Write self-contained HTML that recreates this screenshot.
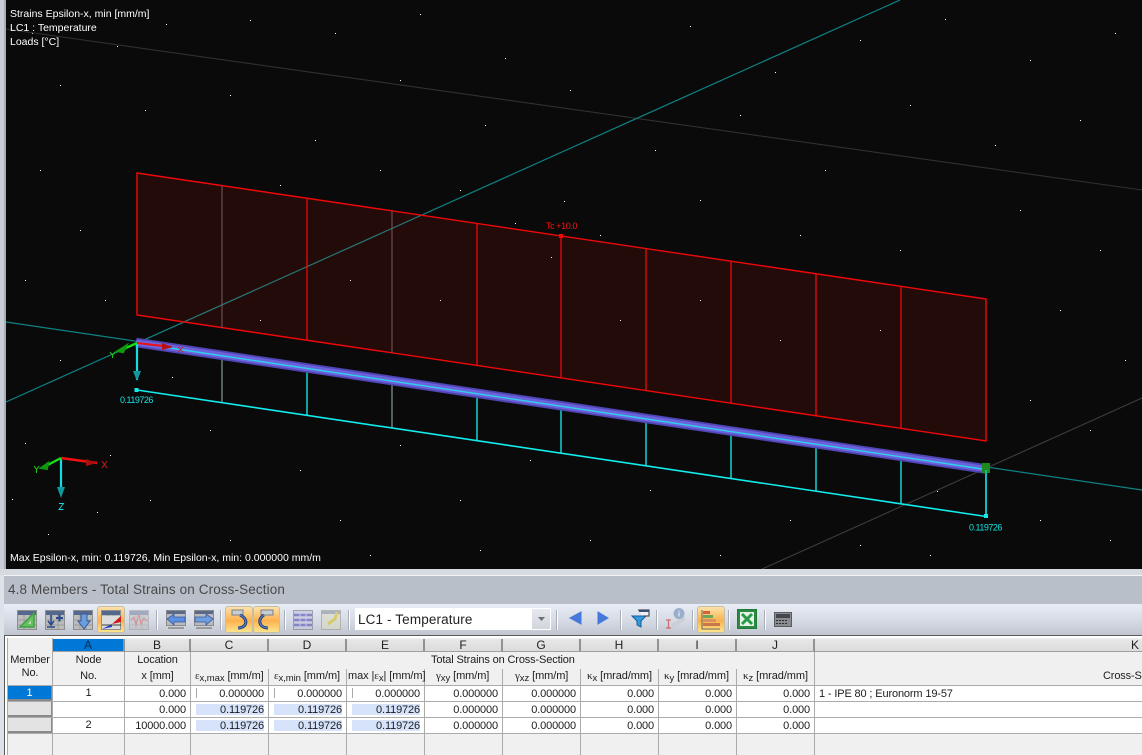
<!DOCTYPE html>
<html><head><meta charset="utf-8"><style>
html,body{margin:0;padding:0;background:#e2e5eb}
#r{position:relative;width:1142px;height:755px;overflow:hidden;background:#dde1e8;font-family:"Liberation Sans",sans-serif;color:#111}
#r svg{position:absolute}
.a{position:absolute;white-space:nowrap}
.t{position:absolute;color:#fff;font-size:10.5px;left:10px;white-space:nowrap;line-height:14px}
.h{position:absolute;top:639px;height:12px;background:linear-gradient(#e8e8e8,#dcdcdc);border-right:2px solid #929292;border-bottom:1px solid #a0a0a0;text-align:center;font-size:12px;line-height:13px;color:#222}
.c{position:absolute;font-size:11px;letter-spacing:-.14px;line-height:14px;white-space:nowrap;color:#1c1c1c}
.f{font-size:11px;letter-spacing:-.08px}
.r{text-align:right}
.m{text-align:center}
.v{position:absolute;width:1px;background:#ababab}
.ln{position:absolute;left:7px;right:0;height:1px;background:#ababab}
.w{position:absolute;height:16px;background:#fff}
.b{position:absolute;height:11px;background:#d6e3fb}
.k{position:absolute;width:1px;height:10px;background:#a8a8a8}
.rb{position:absolute;left:8px;width:43px;height:13px;background:#e3e3e3;border-right:1px solid #8a8a8a;border-bottom:2px solid #8a8a8a}
.sep{position:absolute;top:610px;width:1px;height:20px;background:#a8adb6;border-right:1px solid #fff}
.act{position:absolute;top:606px;height:27px;border:1px solid #c4bfa4;border-radius:3px;background:linear-gradient(#fde3aa,#fcb14e 55%,#fde48c);box-sizing:border-box}
sub{font-size:9.5px;line-height:0;vertical-align:baseline;position:relative;top:2px}
.s{font-family:"Liberation Serif",serif}
</style></head><body><div id="r">

<svg style="left:6px;top:0" width="1136" height="569" viewBox="6 0 1136 569">
<rect x="6" y="0" width="1136" height="569" fill="#0a0a0a"/>
<g fill="#fff">
<path d="M166 24h1v1h-1zM32 33h1v1h-1zM117 46h1v1h-1zM564 201h1v1h-1zM515 223h1v1h-1zM600 235h1v1h-1zM551 257h1v1h-1zM172 377h1v1h-1zM937 491h1v1h-1zM25 443h1v1h-1zM110 455h1v1h-1zM12 499h1v1h-1zM97 512h1v1h-1zM48 534h1v1h-1zM250 20h1v1h-1zM335 33h1v1h-1zM420 14h1v1h-1zM505 58h1v1h-1zM690 26h1v1h-1zM775 72h1v1h-1zM860 40h1v1h-1zM945 19h1v1h-1zM1030 60h1v1h-1zM1115 33h1v1h-1zM60 85h1v1h-1zM145 110h1v1h-1zM230 95h1v1h-1zM315 140h1v1h-1zM400 80h1v1h-1zM485 125h1v1h-1zM570 90h1v1h-1zM655 150h1v1h-1zM740 115h1v1h-1zM825 170h1v1h-1zM910 105h1v1h-1zM995 145h1v1h-1zM1080 120h1v1h-1zM40 170h1v1h-1zM80 230h1v1h-1zM25 280h1v1h-1zM105 300h1v1h-1zM60 360h1v1h-1zM1020 210h1v1h-1zM1100 250h1v1h-1zM1060 310h1v1h-1zM1125 360h1v1h-1zM1030 400h1v1h-1zM1090 430h1v1h-1zM1040 520h1v1h-1zM1110 540h1v1h-1zM280 185h1v1h-1zM380 170h1v1h-1zM460 190h1v1h-1zM700 200h1v1h-1zM800 235h1v1h-1zM900 250h1v1h-1zM210 430h1v1h-1zM300 470h1v1h-1zM150 500h1v1h-1zM230 540h1v1h-1zM340 520h1v1h-1zM400 445h1v1h-1zM460 500h1v1h-1zM530 460h1v1h-1zM590 540h1v1h-1zM650 490h1v1h-1zM720 555h1v1h-1zM790 520h1v1h-1zM860 545h1v1h-1zM930 555h1v1h-1zM370 555h1v1h-1zM480 550h1v1h-1zM260 320h1v1h-1zM350 280h1v1h-1zM440 300h1v1h-1zM620 320h1v1h-1zM700 300h1v1h-1zM780 340h1v1h-1zM880 330h1v1h-1z"/>
</g>
<g fill="none">
<path d="M6 29L1142 190" stroke="#303030" stroke-width="1.100"/>
<path d="M760 570L1142 398" stroke="#3c3c3c" stroke-width="1.100"/>
<path d="M6 402L900 0" stroke="#0e8284" stroke-width="1.200"/>
<path d="M6 322L1142 490" stroke="#0e8284" stroke-width="1.200"/>
</g>
<polygon points="137,173 986,299 986,441 137,315" fill="#ff1c0c" fill-opacity=".105"/>
<polygon points="137,173 986,299 986,441 137,315" fill="none" stroke="#f00808" stroke-width="1.400"/>
<path d="M222 186V328M392 211V353" stroke="#7d5a5a" stroke-width="1"/>
<path d="M307 198V340M477 223.500V365.500M561 236V378M646 248.500V390.500M731 261V403M816 274V416M901 286.500V428.500" stroke="#f00808" stroke-width="1.300"/>
<rect x="559" y="234" width="4" height="4" fill="#f00808"/>
<text x="546" y="229" fill="#ff1010" font-family="Liberation Sans" font-size="9" letter-spacing="-.4">Tc +10.0</text>
<path d="M222 356V403M392 381V428" stroke="#a0b4b4" stroke-width="1"/>
<path d="M307 369V416M477 394V441M561 407V453M646 419V466M731 432V478M816 444V491M901 457V503" stroke="#12e4e4" stroke-width="1.400"/>
<path d="M137 390L986 516.500M986 470V516" stroke="#12ecec" stroke-width="1.600" fill="none"/>
<rect x="984" y="514" width="4" height="4" fill="#12ecec"/>
<rect x="134.500" y="388" width="4" height="4" fill="#12ecec"/>
<path d="M136 342.500L986 469" stroke="#4f45b4" stroke-width="9.500"/>
<path d="M136 342.500L986 469" stroke="#6c62dc" stroke-width="6"/>
<path d="M170 348L986 469.500" stroke="#30d0ec" stroke-width="1.400"/>
<rect x="982" y="463" width="8" height="10" fill="#1c8a1c"/>
<path d="M986 470V474" stroke="#12e4e4"/>
<path d="M137 343V380" stroke="#14dce0" stroke-width="2.200"/>
<path d="M133 371L141 371L137 381Z" fill="#109aa0"/>
<path d="M137 343L172 347" stroke="#f01010" stroke-width="2"/>
<path d="M162 343L172 347L162 350Z" fill="#b81010"/>
<path d="M137 343L119 351" stroke="#14e014" stroke-width="2.400"/>
<path d="M126 346L118 351L123 352Z" fill="#0e980e" stroke="#0e980e" stroke-width="2.500"/>
<path d="M178 347L183 352M183 347L178 352" stroke="#c81818" stroke-width=".8"/>
<path d="M110 352L112.500 355L115 352M112.500 355V358" stroke="#14e014" stroke-width=".9" fill="none"/>
<text x="120" y="403" fill="#12e4e4" font-family="Liberation Sans" font-size="9" letter-spacing="-.5">0.119726</text>
<text x="969" y="530.500" fill="#12e4e4" font-family="Liberation Sans" font-size="9" letter-spacing="-.5">0.119726</text>

<path d="M61 458V490" stroke="#14dce0" stroke-width="2.200"/>
<path d="M57 487L65 487L61 498Z" fill="#109aa0"/>
<path d="M61 458L97 463" stroke="#f01010" stroke-width="2.400"/>
<path d="M86 459L97 463L86 466Z" fill="#a81010"/>
<path d="M61 458L42 468" stroke="#14e014" stroke-width="2.400"/>
<path d="M48 463L41 468L47 469Z" fill="#0e980e" stroke="#0e980e" stroke-width="2"/>
<path d="M102 461L107 468M107 461L102 468" stroke="#d81818" stroke-width=".9"/>
<path d="M34 466L36.500 469.500L39 466M36.500 469.500V473" stroke="#14e014" stroke-width=".9" fill="none"/>
<path d="M59 503.500H63.500L59 509.500H63.500" stroke="#14dce0" stroke-width=".9" fill="none"/>
</svg>
<div class="t" style="top:7px">Strains Epsilon-x, min [mm/m]</div>
<div class="t" style="top:21px">LC1 : Temperature</div>
<div class="t" style="top:35px">Loads [°C]</div>
<div class="t" style="top:551px">Max Epsilon-x, min: 0.119726, Min Epsilon-x, min: 0.000000 mm/m</div>

<div class="a" style="left:0;top:0;width:6px;height:570px;background:#c9cdd5"></div>
<div class="a" style="left:4px;top:0;width:2px;height:570px;background:#a9adb5"></div>
<div class="a" style="left:0;top:569px;width:1142px;height:6px;background:#d5d9e0"></div>
<div class="a" style="left:4px;top:575px;width:1138px;height:1px;background:#f2f4f7"></div>
<div class="a" style="left:4px;top:576px;width:1138px;height:28px;background:#b9bfc9"></div>
<div class="a" style="left:8px;top:581px;font-size:13.5px;line-height:17px;color:#484848;letter-spacing:.11px">4.8 Members - Total Strains on Cross-Section</div>
<div class="a" style="left:4px;top:604px;width:1138px;height:31px;background:linear-gradient(#e9edf6,#d3d8e2 60%,#c0c5cf)"></div>
<div class="a" style="left:4px;top:635px;width:1138px;height:1px;background:#5c5c5c"></div>
<div class="a" style="left:4px;top:636px;width:1138px;height:119px;background:#fff"></div>
<div class="a" style="left:4px;top:635px;width:1px;height:120px;background:#5c5c5c"></div>

<!-- toolbar -->
<div class="act" style="left:97px;width:28px"></div>
<div class="act" style="left:225px;width:28px"></div>
<div class="act" style="left:253px;width:27px"></div>
<div class="act" style="left:697px;width:28px"></div>
<div class="sep" style="left:156px"></div><div class="sep" style="left:220px"></div><div class="sep" style="left:284px"></div><div class="sep" style="left:348px"></div><div class="sep" style="left:556px"></div><div class="sep" style="left:620px"></div><div class="sep" style="left:656px"></div><div class="sep" style="left:692px"></div><div class="sep" style="left:728px"></div><div class="sep" style="left:764px"></div>
<div class="a" style="left:355px;top:608px;width:196px;height:22px;background:#fff"></div>
<div class="a" style="left:532px;top:609px;width:18px;height:20px;background:linear-gradient(#e6e9ef,#d2d5dc)"></div>
<svg style="left:537px;top:616px" width="9" height="6"><path d="M1 1H8L4.500 5Z" fill="#6b6f78"/></svg>
<div class="a" style="left:358px;top:612px;font-size:13.500px;line-height:16px;color:#222;letter-spacing:.13px">LC1 - Temperature</div>

<svg style="left:0;top:604px" width="1142" height="32" viewBox="0 604 1142 32">
<defs>
<g id="g"><rect x=".5" y=".5" width="19" height="19" fill="#bcbcbc" stroke="#8e8e8e"/><rect x="1" y="1" width="18" height="4" fill="#54688e"/><path d="M1 10H19M1 15H19M7 5V19M13 5V19" stroke="#9c9c9c" stroke-width="1"/></g>
<g id="g2"><rect x=".5" y=".5" width="19" height="15" fill="#b9bbc0" stroke="#8a8a8a"/><rect x="1" y="1" width="18" height="3" fill="#5a6a86"/><path d="M2 17h16v2h-16z" fill="#9a9a9a"/></g>
</defs>
<use href="#g" x="17" y="610"/>
<path d="M20 627L34 627L34 613Z" fill="#63c25c" stroke="#3f9f46" stroke-width="1.500"/><path d="M28 624H31V620Z" fill="#b8d8b0"/>
<use href="#g" x="45" y="610"/>
<path d="M51 615V624M48 621L51 625L54 621M47 627H55" stroke="#2a4a8a" stroke-width="1.500" fill="none"/><path d="M56 618H63M59.500 614.500V621.500" stroke="#2a4a8a" stroke-width="2"/>
<use href="#g" x="73" y="610"/>
<path d="M81 614H87V621H90L84 629L78 621H81Z" fill="#6a9ede" stroke="#3a5a98"/>
<use href="#g" x="101" y="610"/>
<rect x="102" y="616" width="18" height="13" fill="#dcdcdc"/>
<path d="M102 629L112 624V627Z" fill="#2340c8"/><path d="M112 624L121 616V622Z" fill="#d01818"/>
<path d="M102 625H121" stroke="#444" stroke-width="1"/>
<g opacity=".45"><use href="#g" x="129" y="610"/><path d="M131 620L134 617L136 625L139 614L141 624L144 618L147 621" stroke="#d83838" fill="none"/></g>
<use href="#g2" x="166" y="610"/>
<path d="M167 619L174 614V617H185V622H174V625Z" fill="#5b8fe0" stroke="#3a5a98" stroke-width=".8"/>
<use href="#g2" x="194" y="610"/>
<path d="M213 619L206 614V617H195V622H206V625Z" fill="#6e9de0" stroke="#3a5a98" stroke-width=".8"/>
<path d="M232 610H243V615H232Z" fill="#c8ccd4" stroke="#7a7f8a"/><path d="M240 615C249 619 247 628 238 628" stroke="#1f3a78" stroke-width="3" fill="none"/><path d="M240 615C249 619 247 628 238 628" stroke="#5b88c8" stroke-width="1" fill="none"/>
<path d="M261 610H273V615H261Z" fill="#c8ccd4" stroke="#7a7f8a"/><path d="M264 615C257 619 259 628 268 628" stroke="#1f3a78" stroke-width="3" fill="none"/><path d="M264 615C257 619 259 628 268 628" stroke="#5b88c8" stroke-width="1" fill="none"/>
<g opacity=".75"><rect x="293.500" y="610.500" width="19" height="19" fill="#c8cae0" stroke="#8a8a9a"/><path d="M294 615H312M294 620H312M294 625H312" stroke="#6a6ac0" stroke-width="2.500"/><path d="M300 611V629M306 611V629" stroke="#c8c8d8"/></g>
<g opacity=".6"><rect x="321.500" y="610.500" width="19" height="19" fill="#dcdcc4" stroke="#9a9a8e"/><rect x="322" y="611" width="18" height="3" fill="#8a90a0"/><path d="M328 624L335 619L337 612" stroke="#d8c020" stroke-width="3" fill="none"/></g>
<path d="M570 618L581 612V624Z" fill="#4678dc" stroke="#4678dc"/>
<path d="M608 618L598 612V624Z" fill="#4678dc" stroke="#4678dc"/>
<path d="M632 616H646L641 621V627L637 625V621Z" fill="#2f9ae0" stroke="#1c5c98"/><path d="M638 610H649V616H643" fill="#eef0f4" stroke="#4a4f58" stroke-width="1.200"/><rect x="639" y="610" width="10" height="2" fill="#3a4f78"/>
<g opacity=".7"><path d="M666 620H671M666 628H671M668.500 620V628" stroke="#c84040" stroke-width="1.200"/><path d="M671 624L685 616V620L673 628Z" fill="#c8cacf"/><circle cx="679" cy="613.500" r="5.500" fill="#8098c0"/><path d="M679 610.500V611.500M679 612.500V616.500" stroke="#fff"/></g>
<path d="M702 610V629H720" stroke="#6a6a5a" fill="none"/><rect x="703" y="611" width="7" height="3" fill="#d86040"/><rect x="703" y="615" width="10" height="3" fill="#68a858"/><rect x="703" y="619" width="13" height="3" fill="#d89060"/><rect x="703" y="623" width="17" height="3" fill="#c87848"/>
<rect x="737.500" y="609.500" width="19" height="19" fill="#2a8a44" stroke="#1f7a38"/><rect x="740" y="612" width="14" height="14" fill="#e6f2e6"/><path d="M742 614L752 624M752 614L742 624" stroke="#2a9a48" stroke-width="3"/>
<rect x="774.500" y="612.500" width="17" height="14" fill="#8a8c90" stroke="#5a5c62"/><rect x="776" y="614" width="14" height="4" fill="#44464e"/><path d="M776 620h2v1h-2zM779 620h2v1h-2zM782 620h2v1h-2zM785 620h2v1h-2zM776 623h2v1h-2zM779 623h2v1h-2zM782 623h2v1h-2zM785 623h2v1h-2z" fill="#2a2b30"/>
</svg>

<!-- table body -->
<div class="a" style="left:7px;top:638px;width:1135px;height:47px;background:#f0f0f0"></div>
<div class="w" style="left:53px;top:686px;width:1089px"></div>
<div class="w" style="left:53px;top:702px;width:1089px"></div>
<div class="w" style="left:53px;top:718px;width:1089px"></div>
<div class="a" style="left:7px;top:734px;width:1135px;height:21px;background:#f0f0f0"></div>
<div class="a" style="left:7px;top:686px;width:46px;height:48px;background:#f0f0f0"></div>

<div class="h" style="left:53px;width:70px;background:#0078d7;color:#0a2a50">A</div>
<div class="h" style="left:125px;width:64px">B</div>
<div class="h" style="left:191px;width:76px">C</div>
<div class="h" style="left:269px;width:76px">D</div>
<div class="h" style="left:347px;width:76px">E</div>
<div class="h" style="left:425px;width:76px">F</div>
<div class="h" style="left:503px;width:76px">G</div>
<div class="h" style="left:581px;width:76px">H</div>
<div class="h" style="left:659px;width:76px">I</div>
<div class="h" style="left:737px;width:76px">J</div>
<div class="h" style="left:815px;width:327px;border-right:0;text-align:right"><span style="position:relative;right:3px">K</span></div>

<div class="ln" style="top:685px"></div><div class="ln" style="top:701px"></div><div class="ln" style="top:717px"></div><div class="ln" style="top:733px"></div>
<div class="v" style="left:7px;top:638px;height:117px"></div>
<div class="v" style="left:52px;top:638px;height:117px"></div>
<div class="v" style="left:124px;top:652px;height:103px"></div>
<div class="v" style="left:190px;top:652px;height:103px"></div>
<div class="v" style="left:268px;top:669px;height:86px"></div>
<div class="v" style="left:346px;top:669px;height:86px"></div>
<div class="v" style="left:424px;top:669px;height:86px"></div>
<div class="v" style="left:502px;top:669px;height:86px"></div>
<div class="v" style="left:580px;top:669px;height:86px"></div>
<div class="v" style="left:658px;top:669px;height:86px"></div>
<div class="v" style="left:736px;top:669px;height:86px"></div>
<div class="v" style="left:814px;top:652px;height:103px"></div>

<div class="c m" style="left:8px;width:44px;top:653px">Member</div>
<div class="c m" style="left:8px;width:44px;top:666px">No.</div>
<div class="c m" style="left:53px;width:71px;top:653px">Node</div>
<div class="c m" style="left:53px;width:71px;top:669px">No.</div>
<div class="c m" style="left:125px;width:65px;top:653px">Location</div>
<div class="c m" style="left:125px;width:65px;top:669px">x [mm]</div>
<div class="c" style="left:431px;top:653px">Total Strains on Cross-Section</div>
<div class="c f" style="left:195px;top:669px"><span class="s">ε</span><sub>x,max</sub> [mm/m]</div>
<div class="c f" style="left:274px;top:669px"><span class="s">ε</span><sub>x,min</sub> [mm/m]</div>
<div class="c f" style="left:348px;top:669px">max |<span class="s">ε</span><sub>x</sub>| [mm/m]</div>
<div class="c f" style="left:436px;top:669px"><span class="s">γ</span><sub>xy</sub> [mm/m]</div>
<div class="c f" style="left:515px;top:669px"><span class="s">γ</span><sub>xz</sub> [mm/m]</div>
<div class="c f" style="left:587px;top:669px"><span class="s">κ</span><sub>x</sub> [mrad/mm]</div>
<div class="c f" style="left:664px;top:669px"><span class="s">κ</span><sub>y</sub> [mrad/mm]</div>
<div class="c f" style="left:743px;top:669px"><span class="s">κ</span><sub>z</sub> [mrad/mm]</div>
<div class="c" style="left:1103px;top:669px">Cross-Section</div>

<!-- row headers -->
<div class="rb" style="top:686px;background:#0078d7;color:#fff;text-align:center;font-size:11px;line-height:14px">1</div>
<div class="rb" style="top:702px"></div>
<div class="rb" style="top:718px"></div>

<!-- bars -->
<div class="k" style="left:196px;top:688px"></div><div class="k" style="left:274px;top:688px"></div><div class="k" style="left:352px;top:688px"></div>
<div class="b" style="left:196px;top:704px;width:68px"></div><div class="b" style="left:274px;top:704px;width:68px"></div><div class="b" style="left:352px;top:704px;width:68px"></div>
<div class="b" style="left:196px;top:720px;width:68px"></div><div class="b" style="left:274px;top:720px;width:68px"></div><div class="b" style="left:352px;top:720px;width:68px"></div>

<!-- rows -->
<div class="c m" style="left:53px;width:71px;top:686px">1</div>
<div class="c m" style="left:53px;width:71px;top:718px">2</div>
<div class="c r" style="left:125px;width:61px;top:687px">0.000</div>
<div class="c r" style="left:125px;width:61px;top:703px">0.000</div>
<div class="c r" style="left:125px;width:61px;top:719px">10000.000</div>

<div class="c r" style="left:191px;width:73px;top:687px">0.000000</div><div class="c r" style="left:269px;width:73px;top:687px">0.000000</div><div class="c r" style="left:347px;width:73px;top:687px">0.000000</div><div class="c r" style="left:425px;width:73px;top:687px">0.000000</div><div class="c r" style="left:503px;width:73px;top:687px">0.000000</div><div class="c r" style="left:581px;width:73px;top:687px">0.000</div><div class="c r" style="left:659px;width:73px;top:687px">0.000</div><div class="c r" style="left:737px;width:73px;top:687px">0.000</div>
<div class="c r" style="left:191px;width:73px;top:703px">0.119726</div><div class="c r" style="left:269px;width:73px;top:703px">0.119726</div><div class="c r" style="left:347px;width:73px;top:703px">0.119726</div><div class="c r" style="left:425px;width:73px;top:703px">0.000000</div><div class="c r" style="left:503px;width:73px;top:703px">0.000000</div><div class="c r" style="left:581px;width:73px;top:703px">0.000</div><div class="c r" style="left:659px;width:73px;top:703px">0.000</div><div class="c r" style="left:737px;width:73px;top:703px">0.000</div>
<div class="c r" style="left:191px;width:73px;top:719px">0.119726</div><div class="c r" style="left:269px;width:73px;top:719px">0.119726</div><div class="c r" style="left:347px;width:73px;top:719px">0.119726</div><div class="c r" style="left:425px;width:73px;top:719px">0.000000</div><div class="c r" style="left:503px;width:73px;top:719px">0.000000</div><div class="c r" style="left:581px;width:73px;top:719px">0.000</div><div class="c r" style="left:659px;width:73px;top:719px">0.000</div><div class="c r" style="left:737px;width:73px;top:719px">0.000</div>
<div class="c" style="left:819px;top:687px">1 - IPE 80 ; Euronorm 19-57</div>

</div></body></html>
